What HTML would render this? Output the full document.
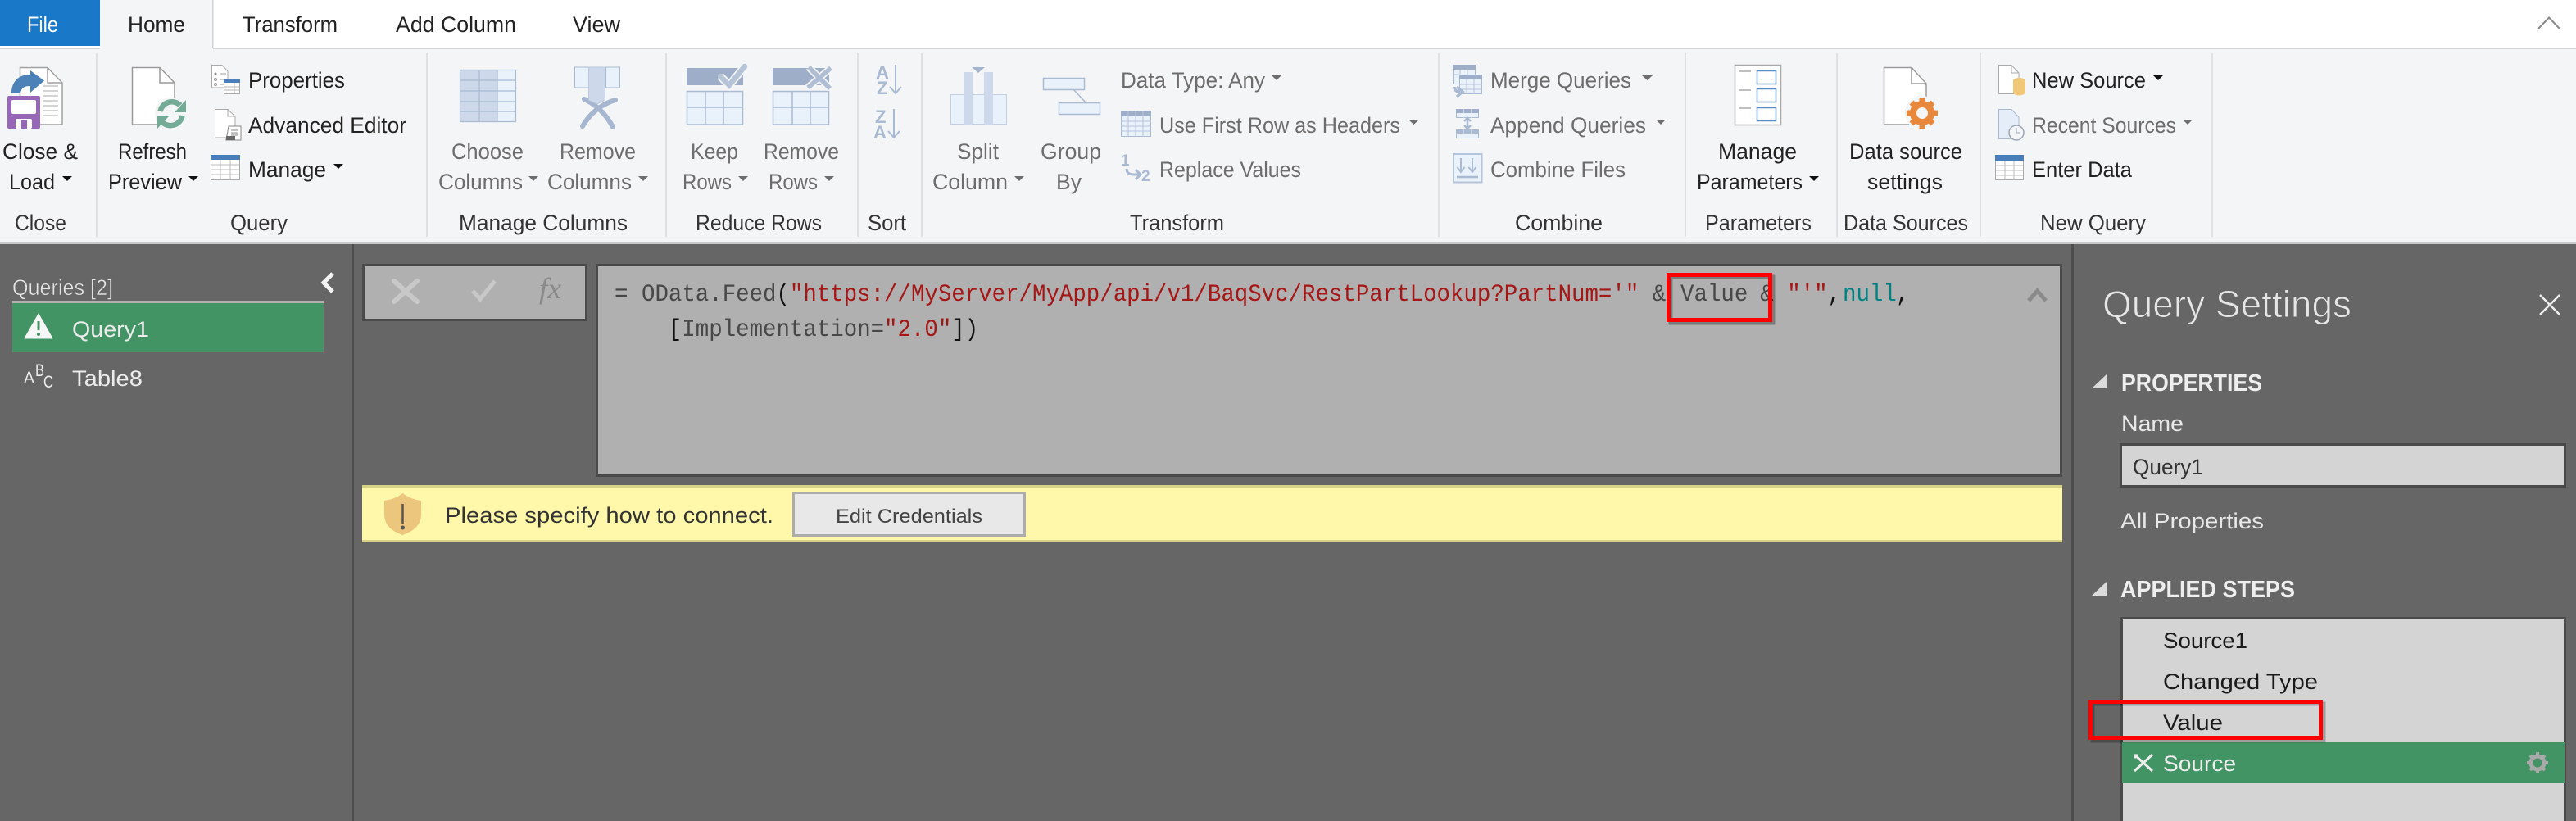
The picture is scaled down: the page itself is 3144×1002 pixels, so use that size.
<!DOCTYPE html>
<html><head><meta charset="utf-8"><title>Power Query Editor</title>
<style>
html,body{margin:0;padding:0;background:#666;width:3144px;height:1002px;overflow:hidden}
svg{display:block}
text{font-family:"Liberation Sans",sans-serif;font-size:27px;fill:#222}
.d{fill:#6d6d6d}
.g{fill:#333}
.m{font-family:"Liberation Mono",monospace;font-size:30px}
.w{fill:#ececec}
.b{font-weight:bold;font-size:28.5px;fill:#eeeeee}
.k{fill:#1a1a1a}
</style></head><body>
<svg width="3144" height="1002" viewBox="0 0 3144 1002" xmlns="http://www.w3.org/2000/svg">
<rect width="3144" height="1002" fill="#666"/>
<!-- tabs -->
<rect width="3144" height="59" fill="#fff"/>
<rect y="59" width="3144" height="237" fill="#f4f5f7"/>
<rect y="58" width="3144" height="2" fill="#d2d3d5"/>
<rect y="295" width="3144" height="3" fill="#c9c9c9"/>
<rect x="122" y="0" width="138" height="60" fill="#f4f5f7"/>
<rect x="259" y="0" width="1.500" height="59" fill="#d2d3d5"/>
<rect x="0" y="0" width="122" height="56" fill="#1a78c9"/>
<text x="33" y="39" textLength="38" lengthAdjust="spacingAndGlyphs" style="fill:#fff">File</text>
<text x="156" y="39" textLength="70" lengthAdjust="spacingAndGlyphs">Home</text>
<text x="296" y="39" textLength="116" lengthAdjust="spacingAndGlyphs">Transform</text>
<text x="483" y="39" textLength="147" lengthAdjust="spacingAndGlyphs">Add Column</text>
<text x="699" y="39" textLength="58" lengthAdjust="spacingAndGlyphs">View</text>
<path d="M3098 35L3111 21.500L3124 35" fill="none" stroke="#8a8a8a" stroke-width="2"/>
<!-- separators -->
<g fill="#dfe1e4">
<rect x="117" y="65" width="2" height="224"/><rect x="520" y="65" width="2" height="224"/><rect x="812" y="65" width="2" height="224"/><rect x="1046" y="65" width="2" height="224"/><rect x="1124" y="65" width="2" height="224"/><rect x="1755" y="65" width="2" height="224"/><rect x="2056" y="65" width="2" height="224"/><rect x="2241" y="65" width="2" height="224"/><rect x="2416" y="65" width="2" height="224"/><rect x="2699" y="65" width="2" height="224"/>
</g>
<!-- ribbon labels -->
<text x="3" y="194" textLength="92" lengthAdjust="spacingAndGlyphs">Close &amp;</text>
<text x="11" y="231" textLength="56" lengthAdjust="spacingAndGlyphs">Load</text>
<text x="144" y="194" textLength="84" lengthAdjust="spacingAndGlyphs">Refresh</text>
<text x="132" y="231" textLength="90" lengthAdjust="spacingAndGlyphs">Preview</text>
<text x="303" y="107" textLength="118" lengthAdjust="spacingAndGlyphs">Properties</text>
<text x="303" y="162" textLength="193" lengthAdjust="spacingAndGlyphs">Advanced Editor</text>
<text x="303" y="216" textLength="95" lengthAdjust="spacingAndGlyphs">Manage</text>
<g>
<text class="d" x="551" y="194" textLength="88" lengthAdjust="spacingAndGlyphs">Choose</text>
<text class="d" x="535" y="231" textLength="103" lengthAdjust="spacingAndGlyphs">Columns</text>
<text class="d" x="683" y="194" textLength="93" lengthAdjust="spacingAndGlyphs">Remove</text>
<text class="d" x="668" y="231" textLength="103" lengthAdjust="spacingAndGlyphs">Columns</text>
<text class="d" x="843" y="194" textLength="58" lengthAdjust="spacingAndGlyphs">Keep</text>
<text class="d" x="833" y="231" textLength="60" lengthAdjust="spacingAndGlyphs">Rows</text>
<text class="d" x="932" y="194" textLength="92" lengthAdjust="spacingAndGlyphs">Remove</text>
<text class="d" x="938" y="231" textLength="60" lengthAdjust="spacingAndGlyphs">Rows</text>
<text class="d" x="1168" y="194" textLength="51" lengthAdjust="spacingAndGlyphs">Split</text>
<text class="d" x="1138" y="231" textLength="92" lengthAdjust="spacingAndGlyphs">Column</text>
<text class="d" x="1270" y="194" textLength="74" lengthAdjust="spacingAndGlyphs">Group</text>
<text class="d" x="1289" y="231" textLength="31" lengthAdjust="spacingAndGlyphs">By</text>
<text class="d" x="1368" y="107" textLength="176" lengthAdjust="spacingAndGlyphs">Data Type: Any</text>
<text class="d" x="1415" y="162" textLength="294" lengthAdjust="spacingAndGlyphs">Use First Row as Headers</text>
<text class="d" x="1415" y="216" textLength="173" lengthAdjust="spacingAndGlyphs">Replace Values</text>
<text class="d" x="1819" y="107" textLength="172" lengthAdjust="spacingAndGlyphs">Merge Queries</text>
<text class="d" x="1819" y="162" textLength="190" lengthAdjust="spacingAndGlyphs">Append Queries</text>
<text class="d" x="1819" y="216" textLength="165" lengthAdjust="spacingAndGlyphs">Combine Files</text>
<text class="d" x="2480" y="162" textLength="176" lengthAdjust="spacingAndGlyphs">Recent Sources</text>
</g>
<text x="2097" y="194" textLength="96" lengthAdjust="spacingAndGlyphs">Manage</text>
<text x="2071" y="231" textLength="129" lengthAdjust="spacingAndGlyphs">Parameters</text>
<text x="2257" y="194" textLength="138" lengthAdjust="spacingAndGlyphs">Data source</text>
<text x="2279" y="231" textLength="92" lengthAdjust="spacingAndGlyphs">settings</text>
<text x="2480" y="107" textLength="139" lengthAdjust="spacingAndGlyphs">New Source</text>
<text x="2480" y="216" textLength="122" lengthAdjust="spacingAndGlyphs">Enter Data</text>
<!-- group labels -->
<text class="g" x="18" y="281" textLength="63" lengthAdjust="spacingAndGlyphs">Close</text>
<text class="g" x="281" y="281" textLength="70" lengthAdjust="spacingAndGlyphs">Query</text>
<text class="g" x="560" y="281" textLength="206" lengthAdjust="spacingAndGlyphs">Manage Columns</text>
<text class="g" x="849" y="281" textLength="154" lengthAdjust="spacingAndGlyphs">Reduce Rows</text>
<text class="g" x="1059" y="281" textLength="47" lengthAdjust="spacingAndGlyphs">Sort</text>
<text class="g" x="1379" y="281" textLength="115" lengthAdjust="spacingAndGlyphs">Transform</text>
<text class="g" x="1849" y="281" textLength="107" lengthAdjust="spacingAndGlyphs">Combine</text>
<text class="g" x="2081" y="281" textLength="130" lengthAdjust="spacingAndGlyphs">Parameters</text>
<text class="g" x="2250" y="281" textLength="152" lengthAdjust="spacingAndGlyphs">Data Sources</text>
<text class="g" x="2490" y="281" textLength="129" lengthAdjust="spacingAndGlyphs">New Query</text>
<!-- dropdown arrows -->
<g fill="#111">
<path d="M76 215H88L82 221Z"/><path d="M230 215H242L236 221Z"/><path d="M407 200H419L413 206Z"/>
<path d="M2208 215H2220L2214 221Z"/><path d="M2628 92H2640L2634 98Z"/>
</g>
<g fill="#6d6d6d">
<path d="M645 215H657L651 221Z"/><path d="M779 215H791L785 221Z"/><path d="M901 215H913L907 221Z"/><path d="M1006 215H1018L1012 221Z"/><path d="M1238 215H1250L1244 221Z"/><path d="M1552 92H1564L1558 98Z"/><path d="M1719 146H1732L1725.500 152Z"/><path d="M2004 92H2017L2010.500 98Z"/><path d="M2021 146H2033L2027 152Z"/><path d="M2664 146H2676L2670 152Z"/>
</g>
<!-- Close & Load icon -->
<path d="M24.500 82.500H58L76 101V152H24.500Z" fill="#fff" stroke="#a0a0a0" stroke-width="1.500"/>
<path d="M58 82.500V101H76" fill="none" stroke="#a0a0a0" stroke-width="1.500"/>
<path d="M52 105H71M52 111H71M52 117H71M52 123H71M52 129H71M52 135H71M52 141H71" stroke="#c5c5c5" stroke-width="1.500"/>
<path d="M14 114C14 100 22 91 37 91V86L54 98.500L37 113V105C30 105 26 107 25 114Z" fill="#4d82b8"/>
<path d="M11 117H47Q49 117 49 119V155Q49 157 47 157H11Q9 157 9 155V119Q9 117 11 117Z" fill="#9868b8"/>
<rect x="14" y="122" width="30" height="17" rx="2" fill="#fff"/>
<rect x="19" y="145" width="20" height="12" rx="2" fill="#fff"/><rect x="26" y="147" width="7" height="10" fill="#9868b8"/>
<!-- Refresh icon -->
<path d="M161.500 82.500H195L213 101V152H161.500Z" fill="#fff" stroke="#9a9a9a" stroke-width="1.500"/>
<path d="M195 82.500V101H213" fill="none" stroke="#9a9a9a" stroke-width="1.500"/>
<circle cx="209" cy="138.500" r="20" fill="#f4f5f7"/>
<path d="M195.500 136A14.500 14.500 0 0 1 220 128.500M222.500 141A14.500 14.500 0 0 1 198 149" fill="none" stroke="#74ab96" stroke-width="6.500"/>
<path d="M227 122V137H213Z" fill="#74ab96"/><path d="M192 142V157L206 142Z" fill="#74ab96"/>
<!-- Properties icon -->
<path d="M258.500 79.500H271L278 87V107H258.500Z" fill="#fff" stroke="#aaa"/>
<path d="M268 90H276M268 97H273M268 103H273" stroke="#999"/>
<circle cx="263" cy="90" r="1.500" fill="#888"/><circle cx="263" cy="97" r="1.500" fill="none" stroke="#999"/><circle cx="263" cy="103" r="1.500" fill="none" stroke="#999"/>
<rect x="273.500" y="96.500" width="19" height="18" fill="#fff" stroke="#aaa"/><rect x="273" y="96" width="20" height="5" fill="#4a7ebb"/>
<path d="M279.500 101V114M286 101V114M274 106H292M274 110H292" stroke="#b5b5b5"/>
<!-- Advanced editor icon -->
<path d="M262.500 133.500H278L287 142V168H262.500Z" fill="#fff" stroke="#aaa"/>
<path d="M278 133.500V142H287" fill="none" stroke="#aaa"/>
<path d="M279 154H294V171H276Z" fill="#fff" stroke="#888"/><rect x="276" y="166" width="11" height="5" fill="#666"/>
<path d="M282 159H290M282 162H290M282 165H290" stroke="#888"/>
<!-- Manage table icon -->
<rect x="257.500" y="189.500" width="35" height="30" fill="#fff" stroke="#aaa"/><rect x="257" y="189" width="36" height="6" fill="#4a7ebb"/>
<path d="M269 195V220M281 195V220M258 201H292M258 207H292M258 213H292" stroke="#bbb"/>
<rect x="2435.500" y="189.500" width="34" height="30" fill="#fff" stroke="#aaa"/><rect x="2435" y="189" width="35" height="7" fill="#4a7ebb"/>
<path d="M2447 196V220M2458 196V220M2436 202H2469M2436 208H2469M2436 214H2469" stroke="#bbb"/>
<!-- Choose columns -->
<rect x="561" y="85" width="46" height="64" fill="#cdd9ea"/><rect x="607" y="85" width="23" height="64" fill="#e9f1fb"/>
<path d="M561.500 85.500H629.500V148.500H561.500ZM585 85V149M607 85V149M562 98H630M562 111H630M562 124H630M562 136H630" fill="none" stroke="#a9bad1" stroke-width="1.200"/>
<!-- Remove columns -->
<rect x="701.500" y="82" width="17" height="25" fill="#e9f1fb" stroke="#a9bad1"/><rect x="739.500" y="82" width="17" height="25" fill="#e9f1fb" stroke="#a9bad1"/>
<path d="M713 121Q735 131 748 155M751 122Q725 130 711 154" fill="none" stroke="#a7b6cf" stroke-width="6" stroke-linecap="round"/>
<path d="M718.500 82H738.500V122L729 127L718.500 122Z" fill="#cdd9ea" stroke="#bcc9dc"/>
<path d="M726 131L735 132" stroke="#a7b6cf" stroke-width="4"/>
<!-- Keep rows -->
<rect x="838" y="83" width="69" height="21" fill="#9eaec8"/>
<rect x="838.500" y="111.500" width="68" height="40.500" fill="#e9f1fb" stroke="#a9bad1" stroke-width="1.500"/>
<path d="M861 111V152M883 111V152M838 131H907" stroke="#a9bad1" stroke-width="1.500"/>
<path d="M879 93L890 104L909 81" fill="none" stroke="#f4f5f7" stroke-width="10"/>
<path d="M879 93L890 104L909 81" fill="none" stroke="#b6c4d8" stroke-width="6.500" stroke-linecap="round"/>
<!-- Remove rows -->
<rect x="943" y="83" width="69" height="21" fill="#9eaec8"/>
<rect x="943.500" y="111.500" width="68" height="40.500" fill="#e9f1fb" stroke="#a9bad1" stroke-width="1.500"/>
<path d="M967 111V152M989 111V152M943 131H1012" stroke="#a9bad1" stroke-width="1.500"/>
<path d="M987 82L1013 108M1014 83L986 107" stroke="#f4f5f7" stroke-width="9"/>
<path d="M987 82L1013 108M1014 83L986 107" stroke="#b0bed4" stroke-width="5.500"/>
<!-- Sort -->
<text x="1069" y="96" style="font-size:22px;fill:#a9bad2;font-weight:bold">A</text><text x="1070" y="115" style="font-size:22px;fill:#a9bad2;font-weight:bold">Z</text>
<text x="1068" y="150" style="font-size:22px;fill:#a9bad2;font-weight:bold">Z</text><text x="1066" y="169" style="font-size:22px;fill:#a9bad2;font-weight:bold">A</text>
<path d="M1093 79V114M1086 106L1093 114L1100 106M1091 133V168M1084 160L1091 168L1098 160" fill="none" stroke="#a9bad2" stroke-width="2"/>
<!-- Split column -->
<rect x="1160.500" y="115.500" width="68" height="36" fill="#e9f1fb" stroke="#c4d0e2"/>
<rect x="1176" y="88" width="11" height="64" fill="#cdd9ea"/><rect x="1201" y="88" width="11" height="64" fill="#cdd9ea"/>
<path d="M1186 82H1202L1194 89Z" fill="#a5b3cb"/>
<!-- Group by -->
<rect x="1273.500" y="95.500" width="50" height="14" fill="#e9f1fb" stroke="#a9bad1" stroke-width="1.500"/>
<rect x="1292.500" y="125.500" width="50" height="14" fill="#e9f1fb" stroke="#a9bad1" stroke-width="1.500"/>
<path d="M1310 109L1325 125" stroke="#a9bad1" stroke-width="1.500"/>
<!-- Use first row -->
<rect x="1368.500" y="135.500" width="36" height="31" fill="#e9f1fb" stroke="#a9bad1"/><rect x="1368" y="135" width="37" height="7" fill="#9eaec8"/>
<path d="M1377 135V167M1386 135V167M1395 135V167M1368 148H1405M1368 154H1405M1368 160H1405" stroke="#b6c4d8"/>
<!-- Replace values -->
<text x="1368" y="202" style="font-size:19px;font-weight:bold;fill:#a9bad2">1</text>
<text x="1393" y="221" style="font-size:19px;font-weight:bold;fill:#a9bad2">2</text>
<path d="M1375 206Q1375 213 1384 213H1392M1386 207L1392 213L1386 219" fill="none" stroke="#a9bad2" stroke-width="3"/>
<!-- Merge -->
<rect x="1773.500" y="79.500" width="27" height="23" fill="#e9f1fb" stroke="#a9bad1"/><rect x="1773" y="79" width="28" height="6" fill="#9eaec8"/>
<path d="M1782 85V103M1791 85V103M1773 91H1781" stroke="#b6c4d8"/>
<rect x="1781.500" y="91.500" width="27" height="23" fill="#e9f1fb" stroke="#a9bad1"/><rect x="1781" y="91" width="28" height="6" fill="#9eaec8"/>
<path d="M1790 97V115M1799 97V115M1782 103H1809M1782 109H1809" stroke="#b6c4d8"/>
<path d="M1775 106Q1775 112 1782 112M1778 106L1785 112L1778 118" fill="none" stroke="#a9bad2" stroke-width="3.500"/>
<!-- Append -->
<rect x="1777.500" y="133.500" width="27" height="10" fill="#e9f1fb" stroke="#a9bad1"/><rect x="1777" y="133" width="28" height="5" fill="#9eaec8"/>
<rect x="1777.500" y="158.500" width="27" height="10" fill="#e9f1fb" stroke="#a9bad1"/><rect x="1777" y="158" width="28" height="5" fill="#a9bad2"/>
<path d="M1786 133V144M1796 133V144M1786 158V168M1796 158V168" stroke="#f0f4fa"/>
<path d="M1791 144V157M1787 148L1791 144L1795 148M1787 153L1791 157L1795 153" fill="none" stroke="#a9bad2" stroke-width="2.500"/>
<!-- Combine files -->
<rect x="1774" y="188" width="34.500" height="34.500" fill="#e9f1fb" stroke="#b6c4d8" stroke-width="2"/>
<path d="M1783 193V210M1778.500 204L1783 210L1787.500 204M1797 193V210M1792.500 204L1797 210L1801.500 204" fill="none" stroke="#a9bad2" stroke-width="2"/>
<path d="M1778 216H1804" stroke="#a9bad2" stroke-width="2.500"/>
<!-- Manage parameters -->
<rect x="2117.500" y="79.500" width="56" height="73" fill="#fff" stroke="#a9a9a9" stroke-width="1.500"/>
<rect x="2144.500" y="86.500" width="23" height="16" fill="#fff" stroke="#5b8ec4" stroke-width="1.500"/>
<rect x="2144.500" y="108.500" width="23" height="16" fill="#fff" stroke="#5b8ec4" stroke-width="1.500"/>
<rect x="2144.500" y="131.500" width="23" height="16" fill="#fff" stroke="#5b8ec4" stroke-width="1.500"/>
<path d="M2122 87H2137M2122 110H2137M2122 132H2137" stroke="#aaa" stroke-width="1.500"/>
<!-- Data source settings -->
<path d="M2299.500 82.500H2333L2351 102V152H2299.500Z" fill="#fff" stroke="#9a9a9a" stroke-width="1.500"/>
<path d="M2333 82.500V102H2351" fill="none" stroke="#9a9a9a" stroke-width="1.500"/>
<circle cx="2346" cy="138" r="21" fill="#f4f5f7"/>
<circle cx="2346" cy="138" r="11" fill="none" stroke="#e8883c" stroke-width="8"/>
<path d="M2346 119V157M2327 138H2365M2333 125L2359 151M2359 125L2333 151" stroke="#e8883c" stroke-width="7" stroke-dasharray="7 24 7 0"/>
<!-- New source -->
<path d="M2439.500 79.500H2455L2464 89V114.500H2439.500Z" fill="#fff" stroke="#aaa"/>
<path d="M2455 79.500V89H2464" fill="none" stroke="#aaa"/>
<path d="M2457 97Q2464 93 2472 97V114Q2464 119 2457 114Z" fill="#f0c878"/>
<!-- Recent sources -->
<path d="M2439.500 133.500H2455L2464 143V169.500H2439.500Z" fill="#e4edf8" stroke="#a9bad1"/>
<circle cx="2461" cy="162" r="9" fill="#f4f5f7" stroke="#9aa5b5" stroke-width="1.500"/>
<path d="M2461 156V162H2466" fill="none" stroke="#9aa5b5"/>
<!-- Main dividers -->
<rect x="430" y="298" width="2" height="704" fill="#4d4d4d"/>
<rect x="2528" y="298" width="3" height="704" fill="#4d4d4d"/>
<!-- Queries pane -->
<text x="15" y="360" textLength="123" lengthAdjust="spacingAndGlyphs" style="fill:#e4e4e4;stroke:#666;stroke-width:.5px">Queries [2]</text>
<rect x="15" y="367" width="380" height="3" fill="#b0b0b0"/>
<rect x="15" y="370" width="380" height="60" fill="#429465"/>
<path d="M47 383L64 413H30Z" fill="#f6f6f6" stroke="#f6f6f6" stroke-linejoin="round"/>
<path d="M47 392V403" stroke="#429465" stroke-width="3"/><circle cx="47" cy="408" r="2" fill="#429465"/>
<text x="88" y="411" textLength="94" lengthAdjust="spacingAndGlyphs" class="w">Query1</text>
<text x="88" y="471" textLength="86" lengthAdjust="spacingAndGlyphs" class="w">Table8</text>
<text x="29" y="468" textLength="13" lengthAdjust="spacingAndGlyphs" style="font-size:21px;fill:#ececec">A</text>
<text x="43" y="459" textLength="11" lengthAdjust="spacingAndGlyphs" style="font-size:21px;fill:#ececec">B</text>
<text x="53" y="473" textLength="12" lengthAdjust="spacingAndGlyphs" style="font-size:21px;fill:#ececec">C</text>
<path d="M406 334L395 345L406 356" fill="none" stroke="#f4f4f4" stroke-width="5"/>
<!-- Toolbar -->
<rect x="443.500" y="323.500" width="272" height="67" fill="#b0b0b0" stroke="#4a4a4a" stroke-width="3"/>
<path d="M481 343L509 368M509 343L481 368" stroke="#c8c8c8" stroke-width="6" stroke-linecap="round"/>
<path d="M577 355L586 365L604 343" fill="none" stroke="#c8c8c8" stroke-width="5"/>
<text x="658" y="364" textLength="27" lengthAdjust="spacingAndGlyphs" style="font-family:'Liberation Serif',serif;font-style:italic;font-size:36px;fill:#8a8a8a">fx</text>
<!-- Formula -->
<rect x="728.500" y="323.500" width="1787" height="257" fill="#b0b0b0" stroke="#4a4a4a" stroke-width="3"/>
<text class="m" x="750" y="367" textLength="16.500" lengthAdjust="spacingAndGlyphs" style="fill:#444">=</text>
<text class="m" x="783" y="367" textLength="164.500" lengthAdjust="spacingAndGlyphs" style="fill:#484848">OData.Feed</text>
<text class="m" x="947.400" y="367" style="fill:#111" textLength="16.500" lengthAdjust="spacingAndGlyphs">(</text>
<text class="m" x="963.900" y="367" textLength="1036.400" lengthAdjust="spacingAndGlyphs" style="fill:#a51616">"https://MyServer/MyApp/api/v1/BaqSvc/RestPartLookup?PartNum='"</text>
<text class="m" x="2016.700" y="367" textLength="16.500" lengthAdjust="spacingAndGlyphs" style="fill:#484848">&amp;</text>
<text class="m" x="2051" y="367" textLength="82.300" lengthAdjust="spacingAndGlyphs" style="fill:#484848">Value</text>
<text class="m" x="2148.300" y="367" textLength="16.500" lengthAdjust="spacingAndGlyphs" style="fill:#484848">&amp;</text>
<text class="m" x="2181.200" y="367" textLength="49.400" lengthAdjust="spacingAndGlyphs" style="fill:#a51616">"'"</text>
<text class="m" x="2230.500" y="367" textLength="16.500" lengthAdjust="spacingAndGlyphs" style="fill:#111">,</text>
<text class="m" x="2249" y="367" textLength="65.800" lengthAdjust="spacingAndGlyphs" style="fill:#008282">null</text>
<text class="m" x="2314" y="367" textLength="16.500" lengthAdjust="spacingAndGlyphs" style="fill:#111">,</text>
<text class="m" x="815.800" y="410" textLength="16.500" lengthAdjust="spacingAndGlyphs" style="fill:#111">[</text>
<text class="m" x="832.300" y="410" textLength="246.800" lengthAdjust="spacingAndGlyphs" style="fill:#484848">Implementation=</text>
<text class="m" x="1079" y="410" textLength="82.300" lengthAdjust="spacingAndGlyphs" style="fill:#a51616">"2.0"</text>
<text class="m" x="1161.300" y="410" textLength="32.900" lengthAdjust="spacingAndGlyphs" style="fill:#111">])</text>
<path d="M2476 367L2486.500 355L2497 367" fill="none" stroke="#8a8a8a" stroke-width="5"/>
<!-- Red boxes -->
<rect x="2039" y="338" width="125" height="56" fill="none" stroke="#000" stroke-opacity=".3" stroke-width="5"/>
<rect x="2036.500" y="335.500" width="124" height="55" fill="none" stroke="#ff0000" stroke-width="5"/>
<!-- Yellow bar -->
<rect x="442" y="592" width="2075" height="70" fill="#fff7aa"/>
<rect x="442" y="592" width="2075" height="3" fill="#d6d387"/><rect x="442" y="659" width="2075" height="3" fill="#d6d387"/>
<path d="M491.500 602Q500 609 514 611V628C514 642 503 649 491.500 653C480 649 469 642 469 628V611Q483 609 491.500 602Z" fill="#edc67e"/>
<path d="M491.500 615V639" stroke="#555" stroke-width="2.500"/><circle cx="491.500" cy="644" r="2.500" fill="#555"/>
<text x="543" y="638" textLength="401" lengthAdjust="spacingAndGlyphs" style="fill:#333">Please specify how to connect.</text>
<rect x="968.500" y="601.500" width="282" height="52" fill="#e8e8e8" stroke="#acacac" stroke-width="3"/>
<text x="1020" y="638" textLength="179" lengthAdjust="spacingAndGlyphs" style="font-size:24px;fill:#444">Edit Credentials</text>
<!-- Query Settings -->
<text x="2566" y="387" textLength="304" lengthAdjust="spacingAndGlyphs" style="font-size:46px;fill:#e6e6e6;stroke:#666;stroke-width:1px">Query Settings</text>
<path d="M3100 360L3124 384M3124 360L3100 384" stroke="#eee" stroke-width="2.500"/>
<path d="M2571 457V474H2553Z" fill="#dcdcdc"/>
<text class="b" x="2589" y="477" textLength="172" lengthAdjust="spacingAndGlyphs">PROPERTIES</text>
<text x="2589" y="526" textLength="76" lengthAdjust="spacingAndGlyphs" style="fill:#e8e8e8">Name</text>
<rect x="2588.500" y="542.500" width="542" height="51" fill="#d4d4d4" stroke="#4a4a4a" stroke-width="3"/>
<text x="2603" y="579" textLength="86" lengthAdjust="spacingAndGlyphs" style="fill:#333">Query1</text>
<text x="2588" y="645" textLength="175" lengthAdjust="spacingAndGlyphs" style="fill:#e8e8e8">All Properties</text>
<path d="M2571 710V727H2553Z" fill="#dcdcdc"/>
<text class="b" x="2588" y="729" textLength="213" lengthAdjust="spacingAndGlyphs">APPLIED STEPS</text>
<rect x="2589.500" y="754.500" width="541" height="260" fill="#d4d4d4" stroke="#4a4a4a" stroke-width="3"/>
<text class="k" x="2640" y="791" textLength="103" lengthAdjust="spacingAndGlyphs">Source1</text>
<text class="k" x="2640" y="841" textLength="189" lengthAdjust="spacingAndGlyphs">Changed Type</text>
<text class="k" x="2640" y="891" textLength="73" lengthAdjust="spacingAndGlyphs">Value</text>
<rect x="2590" y="905" width="540" height="51" fill="#429465"/>
<path d="M2605 921L2627 941M2627 921L2605 941" stroke="#eee" stroke-width="3"/>
<path d="M2609 921L2605 925" stroke="#eee" stroke-width="3"/>
<text x="2640" y="941" textLength="89" lengthAdjust="spacingAndGlyphs" style="fill:#eee">Source</text>
<circle cx="3097" cy="931" r="8" fill="none" stroke="#a9a9a9" stroke-width="5"/>
<path d="M3097 918V944M3084 931H3110M3088 922L3106 940M3106 922L3088 940" stroke="#a9a9a9" stroke-width="4" stroke-dasharray="5 16 5 0"/>
<rect x="2554" y="859" width="282" height="45" fill="none" stroke="#000" stroke-opacity=".25" stroke-width="5"/>
<rect x="2551.500" y="856.500" width="281" height="44" fill="none" stroke="#ff0000" stroke-width="5"/>
</svg>
</body></html>
